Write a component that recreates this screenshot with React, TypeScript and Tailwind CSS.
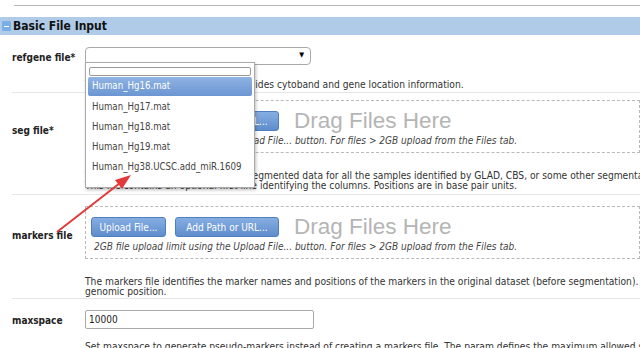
import React from "react";

function UploadBox() {
  return (
    <div className="border border-dashed border-[#b9b9b9] h-[53px] pl-[5px] pt-[10px]">
      <div className="flex items-center">
        <button className="h-[20px] w-[75px] rounded-[3px] border border-[#4f7fc0] bg-gradient-to-b from-[#86aee2] to-[#5f8dcc] text-white text-[10px]">
          Upload File...
        </button>
        <button className="ml-[9px] h-[20px] w-[104px] rounded-[3px] border border-[#4f7fc0] bg-gradient-to-b from-[#86aee2] to-[#5f8dcc] text-white text-[10px]">
          Add Path or URL...
        </button>
        <span className="ml-[15px] text-[22.5px] leading-[20px] text-[#b5b5b5] font-['Liberation_Sans',Arial,sans-serif]">
          Drag Files Here
        </span>
      </div>
      <div className="mt-[4px] pl-[3px] italic text-[10px] leading-[12px] text-[#444] whitespace-nowrap">
        2GB file upload limit using the Upload File... button. For files &gt; 2GB upload from the Files tab.
      </div>
    </div>
  );
}

export default function App() {
  const desc = "ml-[73px] text-[10.2px] leading-[10px] text-[#333] whitespace-nowrap";
  const label = "w-[73px] font-bold text-[10px] text-[#222]";
  return (
    <div className="w-[640px] h-[348px] overflow-hidden bg-white relative font-['DejaVu_Sans_Condensed','DejaVu_Sans',sans-serif] text-[#333]">
      <div className="pt-[5px] pl-[14px]">
        <div className="border-t border-[#b5b5b5]" />
      </div>
      <div className="mt-[11px] h-[18px] bg-[#b0cbe7] flex items-center pl-[2px] gap-[2px]">
        <span className="w-[9px] h-[10px] rounded-[1px] bg-[#7aaee6] flex items-center justify-center">
          <span className="w-[5px] h-[1px] bg-white" />
        </span>
        <span className="font-bold text-[12px] text-[#111]">Basic File Input</span>
      </div>

      {/* refgene */}
      <div className="ml-[12px] border-b border-[#e6e6e6] h-[58px] pt-[11px]">
        <div className="flex items-center">
          <div className={label + " pt-[4px]"}>refgene file*</div>
          <div className="w-[226px] h-[18px] rounded-[4px] border border-[#a9a9a9] flex items-center justify-end pr-[6px]">
            <span className="text-[7px] text-black">▼</span>
          </div>
        </div>
        <div className={desc + " mt-[15px]"}>
          The reference file (refgene.mat) provides cytoband and gene location information.
        </div>
      </div>

      {/* seg */}
      <div className="ml-[12px] border-b border-[#e6e6e6] h-[102px] pt-[7px]">
        <div className="flex items-center">
          <div className={label + " pt-[8px]"}>seg file*</div>
          <div className="flex-1">
            <UploadBox />
          </div>
        </div>
        <div className={desc + " mt-[18px]"}>
          The segmentation file contains the segmented data for all the samples identified by GLAD, CBS, or some other segmentation algorithm.
          <br />
          This file contains an optional first line identifying the columns. Positions are in base pair units.
        </div>
      </div>

      {/* markers */}
      <div className="ml-[12px] border-b border-[#e6e6e6] h-[104px] pt-[11px]">
        <div className="flex items-center">
          <div className={label + " pt-[6px]"}>markers file</div>
          <div className="flex-1">
            <UploadBox />
          </div>
        </div>
        <div className={desc + " mt-[18px]"}>
          The markers file identifies the marker names and positions of the markers in the original dataset (before segmentation). It
          <br />
          genomic position.
        </div>
      </div>

      {/* maxspace */}
      <div className="ml-[12px] pt-[11px]">
        <div className="flex items-center">
          <div className={label + " pt-[2px]"}>maxspace</div>
          <div className="w-[229px] h-[19px] rounded-[2px] border border-[#a9a9a9] flex items-center pl-[3px] text-[10px] text-[#222]">
            10000
          </div>
        </div>
        <div className={desc + " mt-[13px]"}>
          Set maxspace to generate pseudo-markers instead of creating a markers file. The param defines the maximum allowed spacing
        </div>
      </div>

      {/* open dropdown */}
      <div className="absolute left-[85px] top-[62px] w-[170px] h-[126px] bg-white border border-[#a9a9a9] shadow-[1px_2px_3px_rgba(0,0,0,0.25)] overflow-hidden px-[2px] pt-[4px]">
        <div className="h-[9px] rounded-[2px] border border-[#999] mx-[1px]" />
        <div className="mt-[1px] h-[19px] rounded-[2px] bg-gradient-to-b from-[#8fb3e3] to-[#6b96d2] text-white text-[9.6px] flex items-center pl-[4px]">
          Human_Hg16.mat
        </div>
        <div className="pt-[1px]">
          {["Human_Hg17.mat", "Human_Hg18.mat", "Human_Hg19.mat", "Human_Hg38.UCSC.add_miR.1609"].map((t) => (
            <div key={t} className="h-[20px] flex items-center pl-[4px] text-[9.6px] text-[#444] whitespace-nowrap">
              {t}
            </div>
          ))}
        </div>
      </div>

      {/* red arrow annotation */}
      <svg className="absolute left-0 top-0" width="640" height="348">
        <line x1="57" y1="232" x2="120" y2="183" stroke="#e23a3a" strokeWidth="2" />
        <polygon points="131,175 115,180 122,189" fill="#e23a3a" />
      </svg>
    </div>
  );
}
